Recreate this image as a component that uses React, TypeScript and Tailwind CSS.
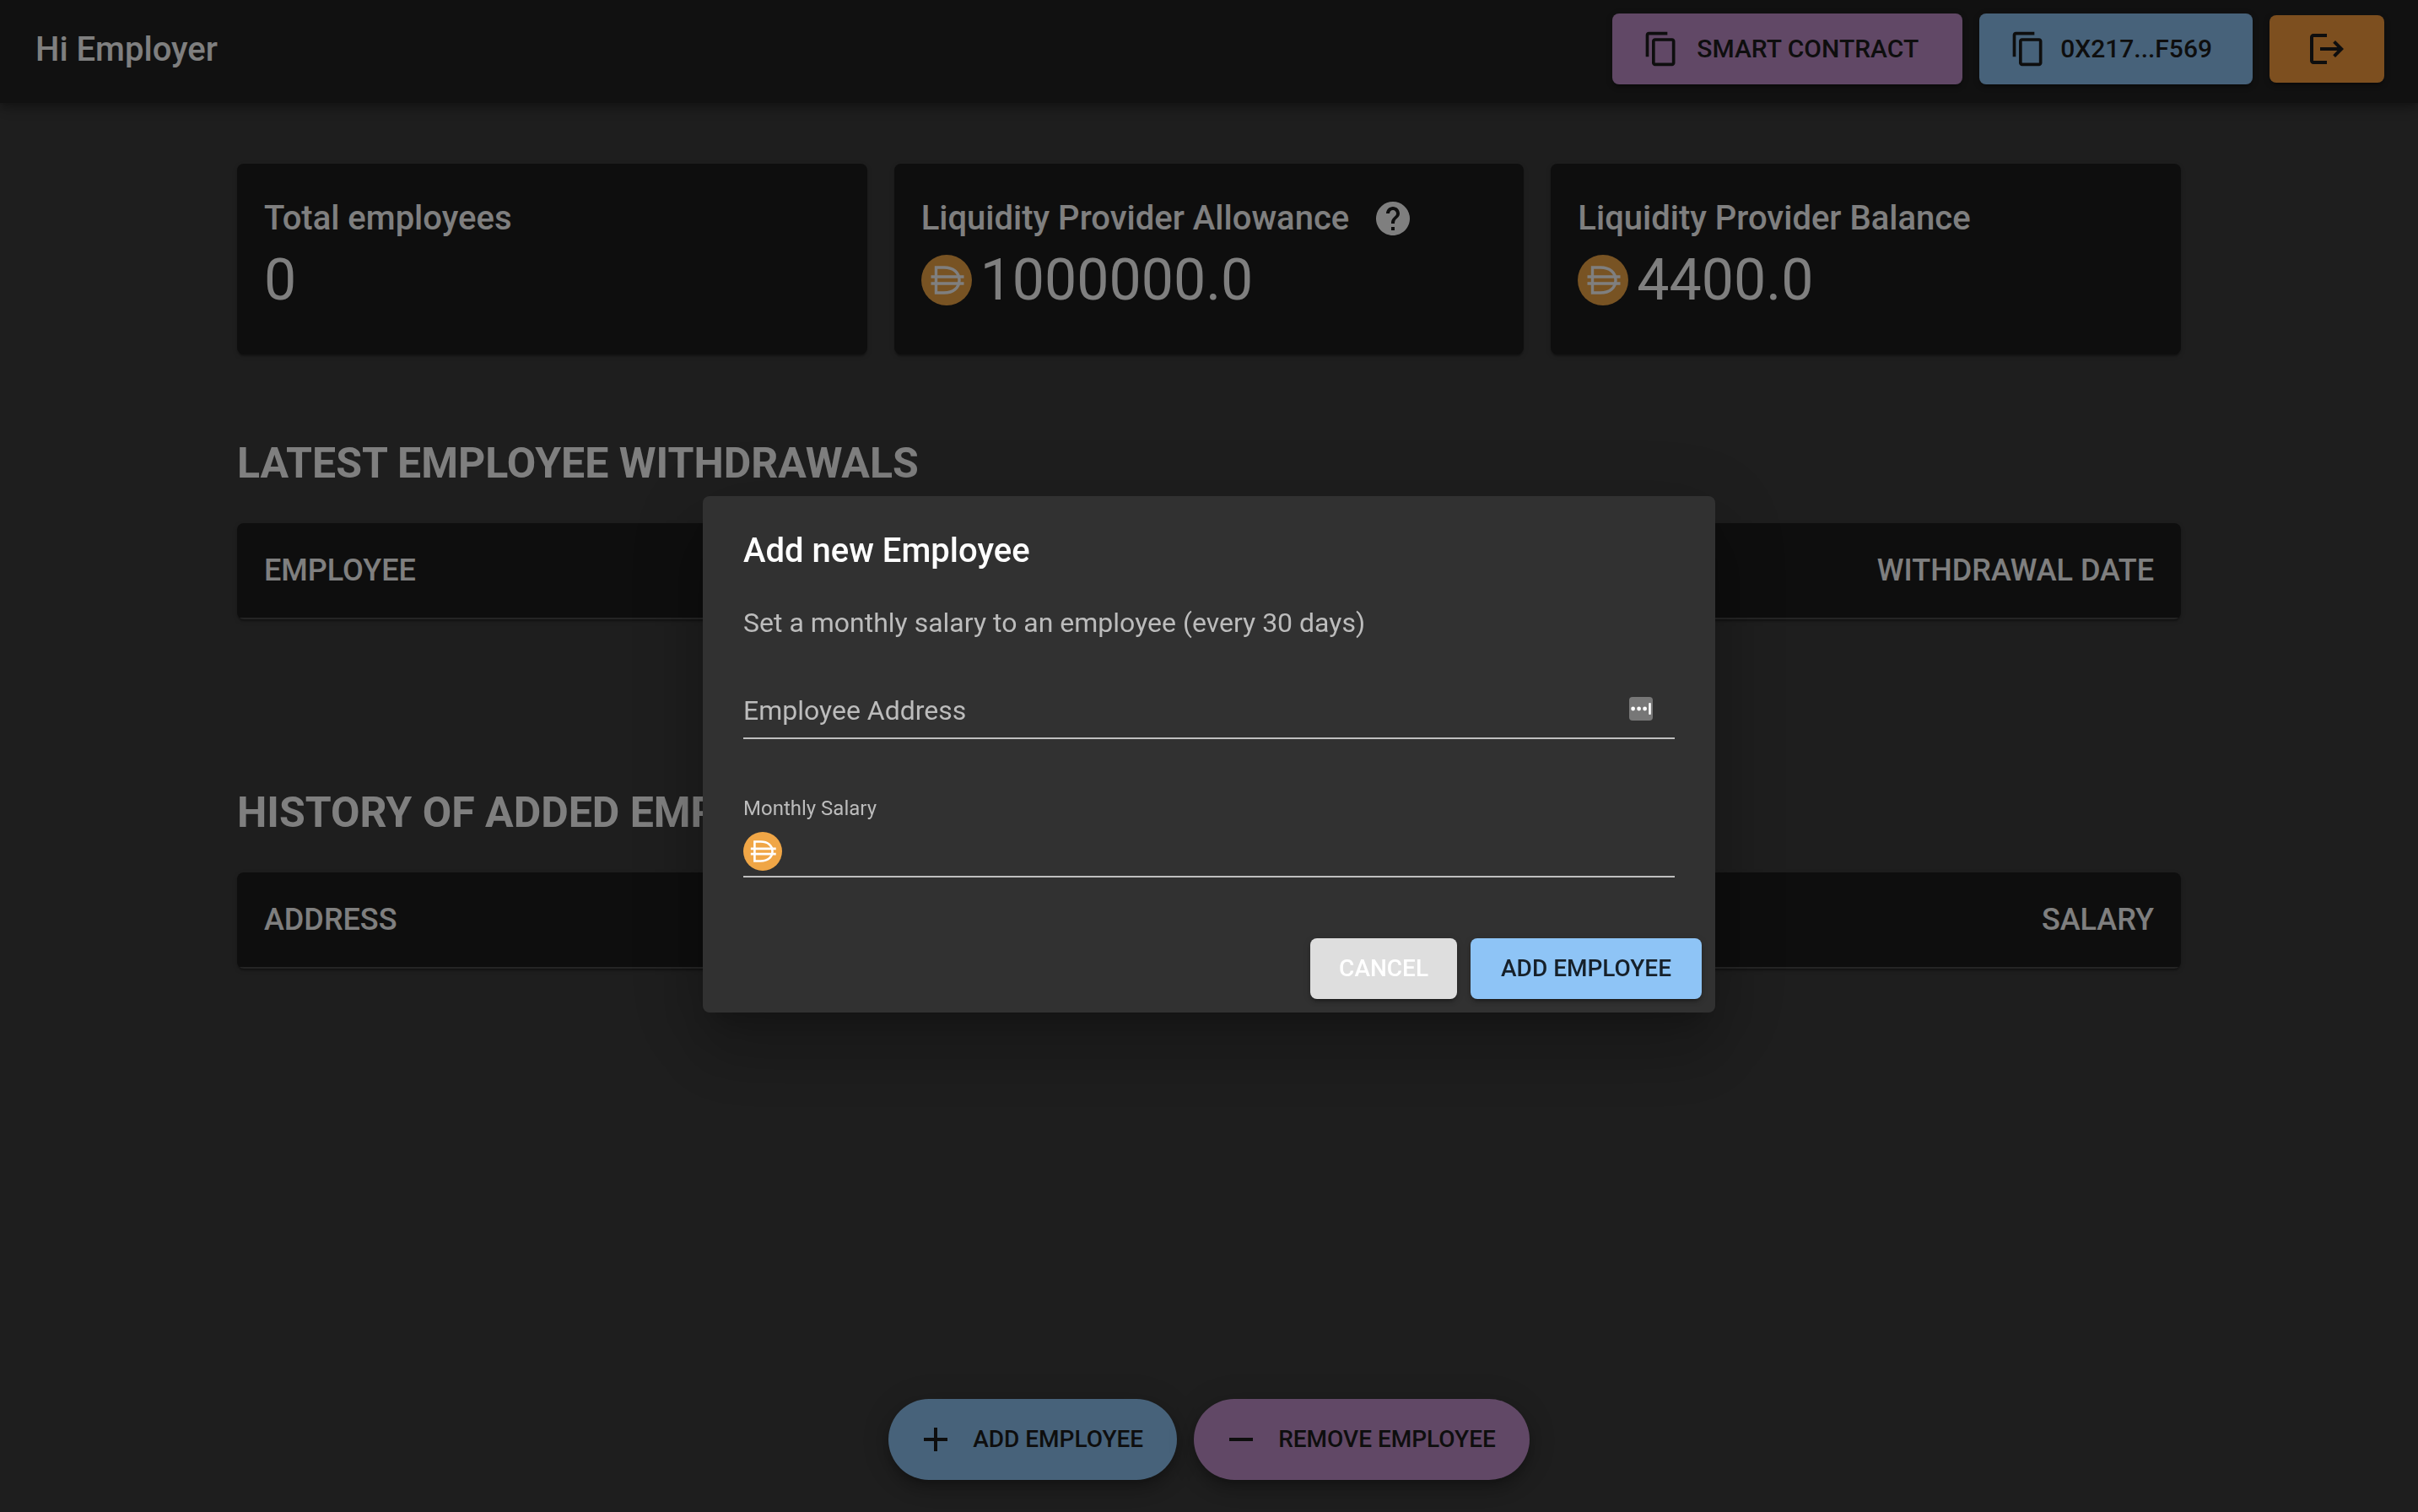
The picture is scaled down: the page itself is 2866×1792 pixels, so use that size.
import React from "react";
import { MdContentCopy, MdHelp, MdAdd, MdRemove } from "react-icons/md";

function LogoutIcon() {
  return (
    <svg viewBox="0 0 24 24" className="size-12" fill="currentColor" aria-hidden="true">
      <path d="M17 7l-1.41 1.41L18.17 11H8v2h10.17l-2.58 2.58L17 17l5-5zM4 5h8V3H4c-1.1 0-2 .9-2 2v14c0 1.1.9 2 2 2h8v-2H4V5z" />
    </svg>
  );
}

function DaiCoin({ className }: { className: string }) {
  return (
    <svg viewBox="0 0 60 60" className={className} aria-hidden="true">
      <circle cx="30" cy="30" r="30" fill="#f0a646" />
      <g fill="none" stroke="#fff">
        <path d="M17.5 15H27C38 15 45 21 45 30S38 45 27 45H17.5Z" strokeWidth="3.4" />
        <path d="M11.5 26H50.5M11.5 34H50.5" strokeWidth="3.6" />
      </g>
    </svg>
  );
}

const raised =
  "shadow-[0_6px_2px_-4px_rgba(0,0,0,0.2),0_4px_4px_rgba(0,0,0,0.14),0_2px_10px_rgba(0,0,0,0.12)]";

function StatCard({ title, value, help, coin }: { title: string; value: string; help?: boolean; coin?: boolean }) {
  return (
    <section className="rounded-lg bg-[#1c1c1c] px-8 pt-8 pb-12 shadow-[0_4px_2px_-2px_rgba(0,0,0,0.2),0_2px_2px_rgba(0,0,0,0.14),0_2px_6px_rgba(0,0,0,0.12)]">
      <h2 className="flex items-center gap-7 text-[40px]/[66px] font-medium">
        {title}
        {help && (
          <button aria-label="About the allowance">
            <MdHelp className="size-12" />
          </button>
        )}
      </h2>
      <p className="flex items-center gap-2.5 text-[68px]/[80px]">
        {coin && <DaiCoin className="size-15" />}
        {value}
      </p>
    </section>
  );
}

function RecordTable({ title, columns }: { title: string; columns: string[] }) {
  return (
    <section>
      <h2 className="text-[50px]/[82px] font-bold uppercase">{title}</h2>
      <table className="mt-[30px] h-[114px] w-full overflow-hidden rounded-lg bg-[#1c1c1c] text-[36px]/[48px] uppercase shadow-[0_4px_2px_-2px_rgba(0,0,0,0.2),0_2px_2px_rgba(0,0,0,0.14),0_2px_6px_rgba(0,0,0,0.12)]">
        <thead>
          <tr className="border-b-2 border-[#4a4a4a]">
            {columns.map((c) => (
              <th key={c} scope="col" className="px-8 text-left font-medium last:text-right">
                {c}
              </th>
            ))}
          </tr>
        </thead>
      </table>
    </section>
  );
}

function AddEmployeeDialog() {
  return (
    <form
      role="dialog"
      aria-modal="true"
      aria-labelledby="dialog-title"
      className="w-full max-w-[1200px] rounded-lg bg-[#313131] text-white shadow-[0_22px_30px_-14px_rgba(0,0,0,0.2),0_48px_76px_6px_rgba(0,0,0,0.14),0_18px_92px_16px_rgba(0,0,0,0.12)]"
    >
      <h2 id="dialog-title" className="px-12 pt-8 text-[40px]/[66px] font-medium">
        Add new Employee
      </h2>
      <div className="px-12 pt-7 text-[#bcbcbc]">
        <p className="text-[32px]/[48px]">Set a monthly salary to an employee (every 30 days)</p>
        <div className="relative mt-12 flex h-[66px] items-center border-b-2 border-[#bfbfbf] pr-[26px]">
          <label htmlFor="address" className="pointer-events-none absolute left-0 text-[32px]/[40px]">
            Employee Address
          </label>
          <input id="address" className="min-w-0 flex-1 bg-transparent text-[32px]/[40px] outline-none" />
          <button type="button" aria-label="Fill from password manager" className="pb-1">
            <svg viewBox="0 0 28 28" className="size-7" aria-hidden="true">
              <rect width="28" height="28" rx="4" fill="#777" />
              <g fill="#fff">
                <circle cx="4.6" cy="14" r="2.4" />
                <circle cx="11.6" cy="14" r="2.4" />
                <circle cx="18.6" cy="14" r="2.4" />
                <rect x="23.2" y="7" width="2.6" height="14" rx="1" />
              </g>
            </svg>
          </button>
        </div>
        <div className="mt-16 border-b-2 border-[#bfbfbf]">
          <label htmlFor="salary" className="block text-[24px]/[36px]">
            Monthly Salary
          </label>
          <div className="flex items-center gap-4 pt-2.5 pb-1.5">
            <DaiCoin className="size-[46px]" />
            <input id="salary" className="min-w-0 flex-1 bg-transparent text-[32px]/[40px] outline-none" />
          </div>
        </div>
      </div>
      <div className="mt-18 flex justify-end gap-4 px-4 pb-4 text-[28px]/[48px] font-medium">
        <button type="button" className={`rounded-lg bg-[#dedede] px-[34px] py-3 uppercase ${raised}`}>
          Cancel
        </button>
        <button type="submit" className={`rounded-lg bg-[#8ec4f6] px-9 py-3 text-[#16202a] uppercase ${raised}`}>
          Add Employee
        </button>
      </div>
    </form>
  );
}

export default function App() {
  return (
    <div className="flex min-h-screen flex-col bg-[#3c3c3c] font-[Roboto,sans-serif] text-white">
      <header className="flex h-[122px] items-start justify-between bg-[#222] pt-4 pr-10 pl-[42px] shadow-[0_4px_8px_-2px_rgba(0,0,0,0.2),0_8px_10px_rgba(0,0,0,0.14),0_2px_20px_rgba(0,0,0,0.12)]">
        <h1 className="text-[40px]/[86px] font-medium">Hi Employer</h1>
        <div className="flex items-center gap-5 text-[30px]/[52px] font-medium text-[#1c1c1c]">
          <button className={`flex items-center gap-5 rounded-lg bg-[#c290cc] py-4 pr-13 pl-9 uppercase ${raised}`}>
            <MdContentCopy className="size-11" />
            Smart contract
          </button>
          <button className={`flex items-center gap-4 rounded-lg bg-[#8ec4f4] py-4 pr-12 pl-9 uppercase ${raised}`}>
            <MdContentCopy className="size-11" />
            0x217...f569
          </button>
          <button aria-label="Log out" className={`rounded-lg bg-[#fa9f3f] px-11 py-4 ${raised}`}>
            <LogoutIcon />
          </button>
        </div>
      </header>

      <main className="mx-auto w-full max-w-[2400px] flex-1 px-12 pt-18">
        <div className="grid grid-cols-3 gap-8">
          <StatCard title="Total employees" value="0" />
          <StatCard title="Liquidity Provider Allowance" value="1000000.0" help coin />
          <StatCard title="Liquidity Provider Balance" value="4400.0" coin />
        </div>
        <div className="mt-22 flex flex-col gap-[188px]">
          <RecordTable title="Latest employee withdrawals" columns={["Employee", "Withdrawal date"]} />
          <RecordTable title="History of added employees" columns={["Address", "Salary"]} />
        </div>
      </main>

      <footer className="flex justify-center gap-5 pb-[38px] text-[28px]/[48px] font-medium text-[#1c1c1c]">
        <button className="flex items-center gap-5 rounded-full bg-[#8ec4f4] py-6 pr-10 pl-8 uppercase shadow-[0_6px_10px_-2px_rgba(0,0,0,0.2),0_12px_20px_rgba(0,0,0,0.14),0_2px_36px_rgba(0,0,0,0.12)]">
          <MdAdd className="size-12" />
          Add Employee
        </button>
        <button className="flex items-center gap-5 rounded-full bg-[#c290cc] py-6 pr-10 pl-8 uppercase shadow-[0_6px_10px_-2px_rgba(0,0,0,0.2),0_12px_20px_rgba(0,0,0,0.14),0_2px_36px_rgba(0,0,0,0.12)]">
          <MdRemove className="size-12" />
          Remove Employee
        </button>
      </footer>

      <div className="fixed inset-0 flex items-center justify-center bg-black/50 pb-1">
        <AddEmployeeDialog />
      </div>
    </div>
  );
}
